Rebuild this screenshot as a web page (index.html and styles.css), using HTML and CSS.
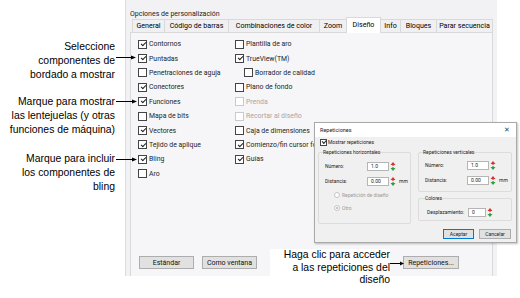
FILE: index.html
```html
<!DOCTYPE html>
<html lang="es">
  <head>
    <meta charset="UTF-8" />
    <meta name="viewport" content="width=device-width, initial-scale=1.0" />
    <title>Opciones de personalización</title>
    <link rel="stylesheet" href="styles.css">
  </head>
  <body>
    <div class="screen">
      <aside class="notes">
        <p class="note note-1">Seleccione<br>componentes de<br>bordado a mostrar</p>
        <p class="note note-2">Marque para mostrar<br>las lentejuelas (y otras<br>funciones de máquina)</p>
        <p class="note note-3">Marque para incluir<br>los componentes de<br>bling</p>
      </aside>

      <section class="window">
        <div class="win-title">Opciones de personalización</div>
        <nav class="tabs">
          <span class="tab" style="width:33px">General</span>
          <span class="tab" style="width:65px">Código de barras</span>
          <span class="tab" style="width:92px">Combinaciones de color</span>
          <span class="tab" style="width:28px">Zoom</span>
          <span class="tab active" style="width:35px">Diseño</span>
          <span class="tab" style="width:21px">Info</span>
          <span class="tab" style="width:37px">Bloques</span>
          <span class="tab" style="width:57px">Parar secuencia</span>
        </nav>
        <div class="page">
          <div class="options">
            <div class="col">
              <label class="opt"><span class="cb on"></span>Contornos</label>
              <label class="opt"><span class="cb on"></span>Puntadas</label>
              <label class="opt"><span class="cb"></span>Penetraciones de aguja</label>
              <label class="opt"><span class="cb on"></span>Conectores</label>
              <label class="opt"><span class="cb on"></span>Funciones</label>
              <label class="opt"><span class="cb"></span>Mapa de bits</label>
              <label class="opt"><span class="cb on"></span>Vectores</label>
              <label class="opt"><span class="cb on"></span>Tejido de aplique</label>
              <label class="opt"><span class="cb on"></span>Bling</label>
              <label class="opt"><span class="cb"></span>Aro</label>
            </div>
            <div class="col">
              <label class="opt"><span class="cb"></span>Plantilla de aro</label>
              <label class="opt"><span class="cb on"></span>TrueView(TM)</label>
              <label class="opt sub"><span class="cb"></span>Borrador de calidad</label>
              <label class="opt"><span class="cb"></span>Plano de fondo</label>
              <label class="opt off"><span class="cb"></span>Prenda</label>
              <label class="opt off"><span class="cb"></span>Recortar al diseño</label>
              <label class="opt"><span class="cb"></span>Caja de dimensiones</label>
              <label class="opt"><span class="cb on"></span>Comienzo/fin cursor formas</label>
              <label class="opt"><span class="cb on"></span>Guías</label>
            </div>
          </div>
          <div class="actions">
            <button class="btn">Estándar</button>
            <button class="btn">Como ventana</button>
            <button class="btn btn-right">Repeticiones...</button>
          </div>
        </div>
      </section>

      <div class="dialog">
        <div class="dlg-title"><span>Repeticiones</span><span class="dlg-close">✕</span></div>
        <div class="dlg-body">
          <label class="dopt"><span class="cb small on"></span>Mostrar repeticiones</label>
          <div class="groups">
            <fieldset class="group group-h">
              <legend>Repeticiones horizontales</legend>
              <div class="field"><span class="flabel">Número:</span><span class="num">1.0</span><svg class="spin" viewBox="0 0 6 9"><path d="M3 0 5.5 3H3.6V4H2.4V3H0.5Z" fill="#e03030"/><path d="M3 9 5.5 6H3.6V5H2.4V6H0.5Z" fill="#2e9e3e"/></svg></div>
              <div class="field"><span class="flabel">Distancia:</span><span class="num">0.00</span><svg class="spin" viewBox="0 0 6 9"><path d="M3 0 5.5 3H3.6V4H2.4V3H0.5Z" fill="#e03030"/><path d="M3 9 5.5 6H3.6V5H2.4V6H0.5Z" fill="#2e9e3e"/></svg><span class="unit">mm</span></div>
              <div class="radio"><span class="rb"></span>Repetición de diseño</div>
              <div class="radio"><span class="rb sel"></span>Otro</div>
            </fieldset>
            <div class="stack">
              <fieldset class="group group-v">
                <legend>Repeticiones verticales</legend>
                <div class="field"><span class="flabel">Número:</span><span class="num">1.0</span><svg class="spin" viewBox="0 0 6 9"><path d="M3 0 5.5 3H3.6V4H2.4V3H0.5Z" fill="#e03030"/><path d="M3 9 5.5 6H3.6V5H2.4V6H0.5Z" fill="#2e9e3e"/></svg></div>
                <div class="field"><span class="flabel">Distancia:</span><span class="num">0.00</span><svg class="spin" viewBox="0 0 6 9"><path d="M3 0 5.5 3H3.6V4H2.4V3H0.5Z" fill="#e03030"/><path d="M3 9 5.5 6H3.6V5H2.4V6H0.5Z" fill="#2e9e3e"/></svg><span class="unit">mm</span></div>
              </fieldset>
              <fieldset class="group group-c">
                <legend>Colores</legend>
                <div class="field"><span class="flabel">Desplazamiento:</span><span class="num short">0</span><svg class="spin" viewBox="0 0 6 9"><path d="M3 0 5.5 3H3.6V4H2.4V3H0.5Z" fill="#e03030"/><path d="M3 9 5.5 6H3.6V5H2.4V6H0.5Z" fill="#2e9e3e"/></svg></div>
              </fieldset>
            </div>
          </div>
          <div class="dlg-actions">
            <button class="dbtn default">Aceptar</button>
            <button class="dbtn">Cancelar</button>
          </div>
        </div>
      </div>

      <p class="note note-bottom">Haga clic para acceder<br>a las repeticiones del<br>diseño</p>

      <svg class="arrows" width="520" height="298" viewBox="0 0 520 298">
        <g stroke="#000" stroke-width="1">
          <path d="M116 57.5H132"/>
          <path d="M116 101.5H133"/>
          <path d="M116 159.5H133"/>
          <path d="M390 263.5H401"/>
        </g>
        <g fill="#000">
          <path d="M136 57.5 131 55.5V59.5Z"/>
          <path d="M137 101.5 132 99.5V103.5Z"/>
          <path d="M137 159.5 132 157.5V161.5Z"/>
          <path d="M404 263.5 400 261.5V265.5Z"/>
        </g>
      </svg>
    </div>
  </body>
</html>
```

FILE: styles.css
```css
body {
  margin: 0;
  background-color: #fff;
  font-family: Roboto, "Liberation Sans", sans-serif;
  color: #000;
}
.screen {
  position: relative;
  width: 520px;
  height: 298px;
  display: flex;
  overflow: hidden;
}

/* callouts */
.notes {
  width: 125px;
  flex: none;
  box-sizing: border-box;
  padding-right: 10px;
}
.note {
  margin: 0;
  font-family: "Liberation Sans", Arial, sans-serif;
  font-size: 10.4px;
  line-height: 14px;
  text-align: right;
}
.note-1 {
  margin-top: 40px;
}
.note-2 {
  margin-top: 13px;
}
.note-3 {
  margin-top: 15px;
}
.note-bottom {
  position: absolute;
  left: 270px;
  top: 249px;
  width: 120px;
  line-height: 12.5px;
  background-color: #fff;
  padding-bottom: 6px;
}
.arrows {
  position: absolute;
  left: 0;
  top: 0;
  pointer-events: none;
}

/* main window */
.window {
  width: 372px;
  height: 276px;
  flex: none;
  box-sizing: border-box;
  background-color: #f2f2f4;
  border-left: 1px solid #dcdcdc;
  padding: 0 4px;
  display: flex;
  flex-direction: column;
}
.win-title {
  height: 19px;
  box-sizing: border-box;
  padding: 10px 0 0 0;
  font-size: 7px;
  line-height: 9px;
  color: #222;
}
.tabs {
  display: flex;
  height: 13px;
  margin-left: 3px;
  position: relative;
  z-index: 1;
}
.tab {
  box-sizing: border-box;
  height: 13px;
  margin-left: -1px;
  border: 1px solid #d9d9d9;
  border-bottom: none;
  background-color: #f0f0f2;
  font-size: 7.1px;
  line-height: 12px;
  text-align: center;
  white-space: nowrap;
  overflow: hidden;
}
.tab.active {
  height: 16px;
  margin-top: -2px;
  line-height: 13px;
  background-color: #fff;
}
.page {
  flex: 1;
  border: 1px solid #d9d9d9;
  border-bottom: none;
  background-color: #f6f6f8;
  padding: 4px 0 7px 7px;
  display: flex;
  flex-direction: column;
  justify-content: space-between;
}
.options {
  display: grid;
  grid-template-columns: 97px auto;
}
.col {
  display: flex;
  flex-direction: column;
}
.opt {
  display: flex;
  align-items: center;
  gap: 2px;
  height: 14.4px;
  font-size: 6.9px;
  color: #1e1e1e;
  white-space: nowrap;
}
.opt.sub {
  padding-left: 9px;
}
.opt.off {
  color: #a6a6a6;
}
.cb {
  position: relative;
  flex: none;
  width: 9px;
  height: 9px;
  box-sizing: border-box;
  border: 1px solid #444;
  background-color: #fff;
}
.opt.off .cb {
  border-color: #cacaca;
}
.cb.on::after {
  content: "";
  position: absolute;
  left: 1.5px;
  top: 1.2px;
  width: 4px;
  height: 2px;
  border-left: 1px solid #222;
  border-bottom: 1px solid #222;
  transform: rotate(-45deg);
}
.actions {
  display: flex;
  gap: 8px;
  padding-left: 1px;
  padding-right: 33px;
}
.btn {
  width: 55px;
  height: 13px;
  padding: 0;
  border: 1px solid #adadad;
  background-color: #e1e1e1;
  font-family: Roboto, sans-serif;
  font-size: 7px;
  color: #111;
}
.btn-right {
  margin-left: auto;
  width: 56px;
}

/* Repeticiones dialog */
.dialog {
  position: absolute;
  left: 314px;
  top: 122px;
  width: 203px;
  height: 121px;
  box-sizing: border-box;
  border: 1px solid #a9a9a9;
  background-color: #f0f0f0;
  box-shadow: 1px 1px 2px rgba(0, 0, 0, 0.25);
  font-size: 5px;
  color: #222;
}
.dlg-title {
  height: 14px;
  display: flex;
  align-items: center;
  justify-content: space-between;
  padding: 0 6px 0 5px;
  background-color: #fff;
  font-size: 5.5px;
}
.dlg-close {
  font-size: 7px;
  color: #444;
}
.dlg-body {
  padding: 0 4px 0 3px;
}
.dopt {
  display: flex;
  align-items: center;
  gap: 1px;
  height: 10px;
  padding-left: 2px;
}
.cb.small {
  width: 7px;
  height: 7px;
}
.cb.small.on::after {
  left: 1px;
  top: 0.6px;
  width: 3px;
  height: 1.5px;
}
.groups {
  display: flex;
  gap: 7px;
  margin-top: 1px;
}
.group {
  margin: 0;
  min-inline-size: 0;
  border: 1px solid #dcdcdc;
  border-radius: 2px;
}
.group legend {
  padding: 0;
  margin-left: -2px;
  line-height: 8px;
  background-color: #f0f0f0;
}
.group-h {
  width: 93px;
  box-sizing: border-box;
  padding: 5px 0 10px 6px;
}
.stack {
  display: flex;
  flex-direction: column;
  gap: 2px;
}
.group-v {
  width: 94px;
  box-sizing: border-box;
  padding: 4px 0 6px 6px;
}
.group-c {
  width: 94px;
  box-sizing: border-box;
  padding: 5px 0 3px 8px;
}
.field {
  display: flex;
  align-items: center;
  height: 10px;
}
.field + .field {
  margin-top: 5px;
}
.flabel {
  width: 42px;
  flex: none;
}
.group-c .flabel {
  width: 41px;
}
.num {
  width: 22px;
  height: 9px;
  box-sizing: border-box;
  border: 1px solid #b5b5b5;
  background-color: #fff;
  padding-left: 3px;
  line-height: 7px;
}
.num.short {
  width: 18px;
}
.spin {
  width: 6px;
  height: 9px;
  margin-left: 1px;
}
.unit {
  margin-left: 3px;
}
.radio {
  display: flex;
  align-items: center;
  gap: 2px;
  height: 10px;
  padding-left: 9px;
  color: #9a9a9a;
}
.field + .radio {
  margin-top: 4px;
}
.radio + .radio {
  margin-top: 3px;
}
.rb {
  position: relative;
  width: 6px;
  height: 6px;
  box-sizing: border-box;
  border: 1px solid #c4c4c4;
  border-radius: 50%;
  background-color: #fff;
}
.rb.sel::after {
  content: "";
  position: absolute;
  left: 1px;
  top: 1px;
  width: 2px;
  height: 2px;
  border-radius: 50%;
  background-color: #b0b0b0;
}
.dlg-actions {
  display: flex;
  justify-content: flex-end;
  gap: 5px;
  margin-top: 5px;
  padding-right: 1px;
}
.dbtn {
  width: 32px;
  height: 10px;
  padding: 0;
  border: 1px solid #adadad;
  background-color: #e1e1e1;
  font-family: Roboto, sans-serif;
  font-size: 5px;
  color: #222;
}
.dbtn.default {
  border-color: #0078d7;
  width: 31px;
}
```
